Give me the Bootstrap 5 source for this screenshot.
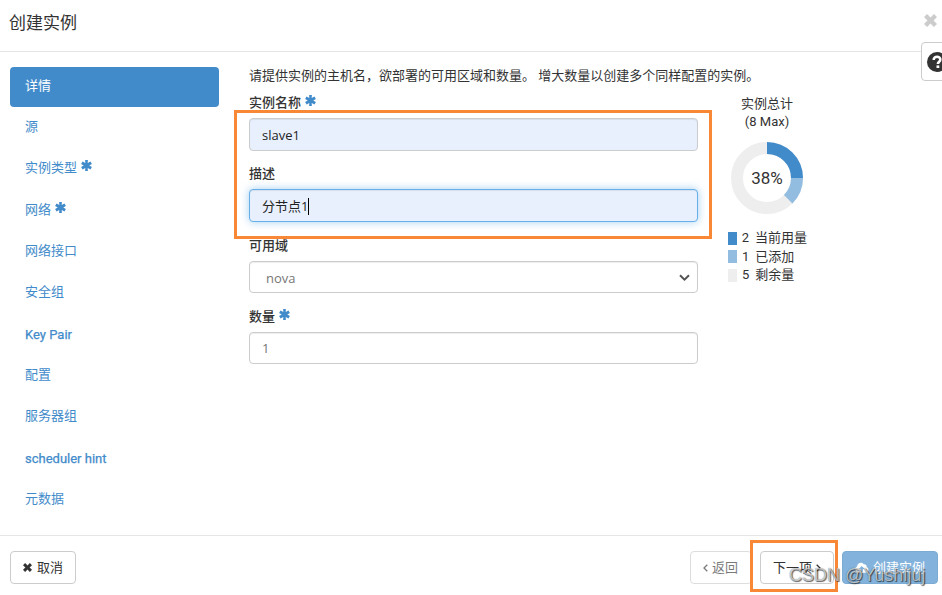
<!DOCTYPE html>
<html lang="zh-CN">
<head>
<meta charset="utf-8">
<meta name="viewport" content="width=device-width, initial-scale=1">
<title>创建实例</title>
<link href="https://cdn.jsdelivr.net/npm/bootstrap@5.3.0/dist/css/bootstrap.min.css" rel="stylesheet">
<style>
body{font-family:Roboto,"Noto Sans CJK SC",sans-serif;font-size:13px;line-height:18px;color:#333;background:#fff;overflow:hidden}
.wizard{width:942px;height:595px}
.wizard-head{height:52px;padding:0 4px 6px 9px;border-bottom:1px solid #e5e5e5}
.wizard-title{font-size:17px;line-height:24px;font-weight:400;color:#333;padding-top:1px}
.close-x{color:#ccc;margin-top:-5px}
.wizard-main{padding:15px 0 0 10px;height:483px}
.steps{width:209px;gap:2px}
.steps .nav-link{height:39.3px;line-height:18px;padding:9px 15px;color:#428bca;border-radius:4px}
.steps .nav-link.active{background:#428bca;height:40px;padding-top:10px}
.steps .latin{font-weight:400;padding-top:11px;-webkit-text-stroke:.25px #428bca}
.star{width:11px;height:11px;fill:#428bca;margin-left:4px;vertical-align:1px}
.fields{width:449px;margin-left:30px}
.intro{height:27px;line-height:17px;white-space:nowrap}
.form-label{display:block;height:16px;line-height:18px;margin:0 0 8px;font-weight:500}
.group{height:71px}
.late{padding-top:1px}
.form-control,.form-select{height:33px;padding:7px 12px 5px;font-family:"Open Sans","Noto Sans CJK SC",sans-serif;font-size:13px;line-height:19px;border-color:#ccc;border-radius:4px;box-shadow:inset 0 1px 1px rgba(0,0,0,.075);color:#777}
.form-select{height:32px;padding:6px 16px;line-height:20px;background-image:none}
.short{height:32px;padding-top:6px}
.filled{background:#e8f0fe!important;color:#222}
.focused{border-color:#66afe9;box-shadow:inset 0 1px 1px rgba(0,0,0,.075),0 0 8px rgba(102,175,233,.6)}
.caret{width:1px;height:17px;background:#000}
.select-arrow{right:7px;top:12px}
.quota{width:80px;margin-left:29px;padding-top:28px}
.quota-title{width:80px;line-height:18px}
.donut{width:74px;height:74px;margin:10px 0 14px 3px}
.donut text{font-size:17px;fill:#333}
.key{gap:5px;height:18.5px;line-height:18px;white-space:nowrap;margin-left:1px}
.swatch{width:9px;height:13px}
.key-label{margin-left:6px}
.wizard-foot{height:60px;padding:15px 4px 0 10px;border-top:1px solid #e5e5e5}
.wizard-foot .btn{height:33px;font-size:13px;line-height:19px;padding:6px 12px;border-radius:4px;border-color:#ccc;color:#333;background:#fff;white-space:nowrap}
.wizard-foot .cancel{width:66px;gap:5px}
.wizard-foot .launch{background:#428bca;border-color:#357ebd;color:#fff;opacity:.65;width:96px}
.wizard-foot .back{width:62px;opacity:.65}
.wizard-foot .next{width:74px;margin:0 8px}
.help-tab{left:921px;top:42px;width:32px;height:39px;border:1px solid #ccc;border-radius:4px;background:#fff}
.help-icon{left:5px;top:9px}
.marker{border:3px solid #f88836;pointer-events:none}
.marker-fields{left:234px;top:110px;width:478px;height:129px}
.marker-next{left:750px;top:540px;width:88px;height:52px}
.watermark{left:789px;top:564px;font-family:"Liberation Sans",sans-serif;font-size:18px;line-height:22px;color:rgba(255,255,255,.65);text-shadow:1px 1px 1px rgba(0,0,0,.6),0 0 1px rgba(0,0,0,.55);white-space:nowrap}
</style>
</head>
<body>
<svg class="d-none"><symbol id="star" viewBox="0 0 12 12"><path d="M4.5 0h3l-.2 3.4 3-1.7 1.6 2.7L9 6l2.9 1.6-1.6 2.7-3-1.7.2 3.4h-3l.2-3.4-3 1.7L.1 7.6 3 6 .1 4.4l1.6-2.7 3 1.7z"/></symbol>
<symbol id="cross" viewBox="0 0 14 14"><path d="M3.3 0 7 3.7 10.7 0 14 3.3 10.3 7l3.7 3.7-3.3 3.3L7 10.3 3.3 14 0 10.7 3.7 7 0 3.3z"/></symbol></svg>
<div class="wizard position-relative overflow-hidden d-flex flex-column">
  <header class="wizard-head d-flex align-items-center justify-content-between">
    <h1 class="wizard-title m-0">创建实例</h1>
    <svg class="close-x" width="15" height="13" fill="currentColor"><use href="#cross"/></svg>
  </header>
  <main class="wizard-main d-flex align-items-start">
    <nav class="steps nav nav-pills flex-column flex-nowrap">
      <a class="nav-link active" href="#">详情</a>
      <a class="nav-link" href="#">源</a>
      <a class="nav-link" href="#">实例类型<svg class="star"><use href="#star"/></svg></a>
      <a class="nav-link" href="#">网络<svg class="star"><use href="#star"/></svg></a>
      <a class="nav-link" href="#">网络接口</a>
      <a class="nav-link" href="#">安全组</a>
      <a class="nav-link latin" href="#">Key Pair</a>
      <a class="nav-link" href="#">配置</a>
      <a class="nav-link" href="#">服务器组</a>
      <a class="nav-link latin" href="#">scheduler hint</a>
      <a class="nav-link" href="#">元数据</a>
    </nav>
    <form class="fields">
      <div class="intro">请提供实例的主机名，欲部署的可用区域和数量。 增大数量以创建多个同样配置的实例。</div>
      <div class="group"><label class="form-label">实例名称<svg class="star"><use href="#star"/></svg></label><div class="form-control filled">slave1</div></div>
      <div class="group"><label class="form-label">描述</label><div class="form-control filled focused d-flex align-items-center">分节点1<span class="caret"></span></div></div>
      <div class="group late"><label class="form-label">可用域</label><div class="form-select position-relative">nova<svg class="select-arrow position-absolute" width="11" height="8" fill="none" stroke="#555" stroke-width="2"><path d="M1 1.2 5.5 5.6 10 1.2"/></svg></div></div>
      <div class="group late"><label class="form-label">数量<svg class="star"><use href="#star"/></svg></label><div class="form-control short">1</div></div>
    </form>
    <aside class="quota">
      <div class="quota-title text-center">实例总计<br>(8 Max)</div>
      <svg class="donut d-block" viewBox="0 0 74 74"><g fill="none" stroke-width="12"><circle cx="37" cy="37" r="30" stroke="#eee"/><path d="M37 7A30 30 0 0 1 67 37" stroke="#428bca"/><path d="M67 37A30 30 0 0 1 58.2 58.2" stroke="#92bce0"/></g><text x="37" y="43" text-anchor="middle">38%</text></svg>
      <div class="key d-flex align-items-center"><span class="swatch" style="background:#428bca"></span><span>2<span class="key-label">当前用量</span></span></div>
      <div class="key d-flex align-items-center"><span class="swatch" style="background:#92bce0"></span><span>1<span class="key-label">已添加</span></span></div>
      <div class="key d-flex align-items-center"><span class="swatch" style="background:#eee"></span><span>5<span class="key-label">剩余量</span></span></div>
    </aside>
  </main>
  <footer class="wizard-foot d-flex align-items-start">
    <button class="btn cancel d-flex align-items-center"><svg width="9" height="9" fill="#333"><use href="#cross"/></svg>取消</button>
    <div class="d-flex ms-auto">
      <button class="btn back d-flex align-items-center gap-1"><svg width="5" height="8" fill="none" stroke="#333" stroke-width="1.3"><path d="M4.3.7 1 4l3.3 3.3"/></svg>返回</button>
      <button class="btn next d-flex align-items-center gap-1">下一项<svg width="5" height="8" fill="none" stroke="#333" stroke-width="1.3"><path d="M.7.7 4 4 .7 7.3"/></svg></button>
      <button class="btn launch d-flex align-items-center gap-1"><svg width="15" height="11" viewBox="0 0 15 11" fill="#fff"><path fill-rule="evenodd" d="M3.4 11A3.4 3.4 0 0 1 2.2 4.5 4.1 4.1 0 0 1 9.4 2a2.4 2.4 0 0 1 3 2.9A3.2 3.2 0 0 1 12 11zM7.2 4 4 7.2h2V10h2.5V7.2h2z"/></svg>创建实例</button>
    </div>
  </footer>
  <div class="help-tab position-absolute"><svg class="help-icon position-absolute" width="20" height="20"><circle cx="10" cy="10" r="10" fill="#333"/><path d="M6.7 8C6.7 3.6 13.5 4 13.3 7.7c0 2-2.4 2.2-2.4 4.3" fill="none" stroke="#fff" stroke-width="2.6"/><path d="M9.5 13.4h2.8V16H9.5z" fill="#fff"/></svg></div>
  <div class="marker marker-fields position-absolute"></div>
  <div class="marker marker-next position-absolute"></div>
  <div class="watermark position-absolute">CSDN @Yushijuj</div>
</div>
<script src="https://cdn.jsdelivr.net/npm/bootstrap@5.3.0/dist/js/bootstrap.bundle.min.js"></script>
</body>
</html>
